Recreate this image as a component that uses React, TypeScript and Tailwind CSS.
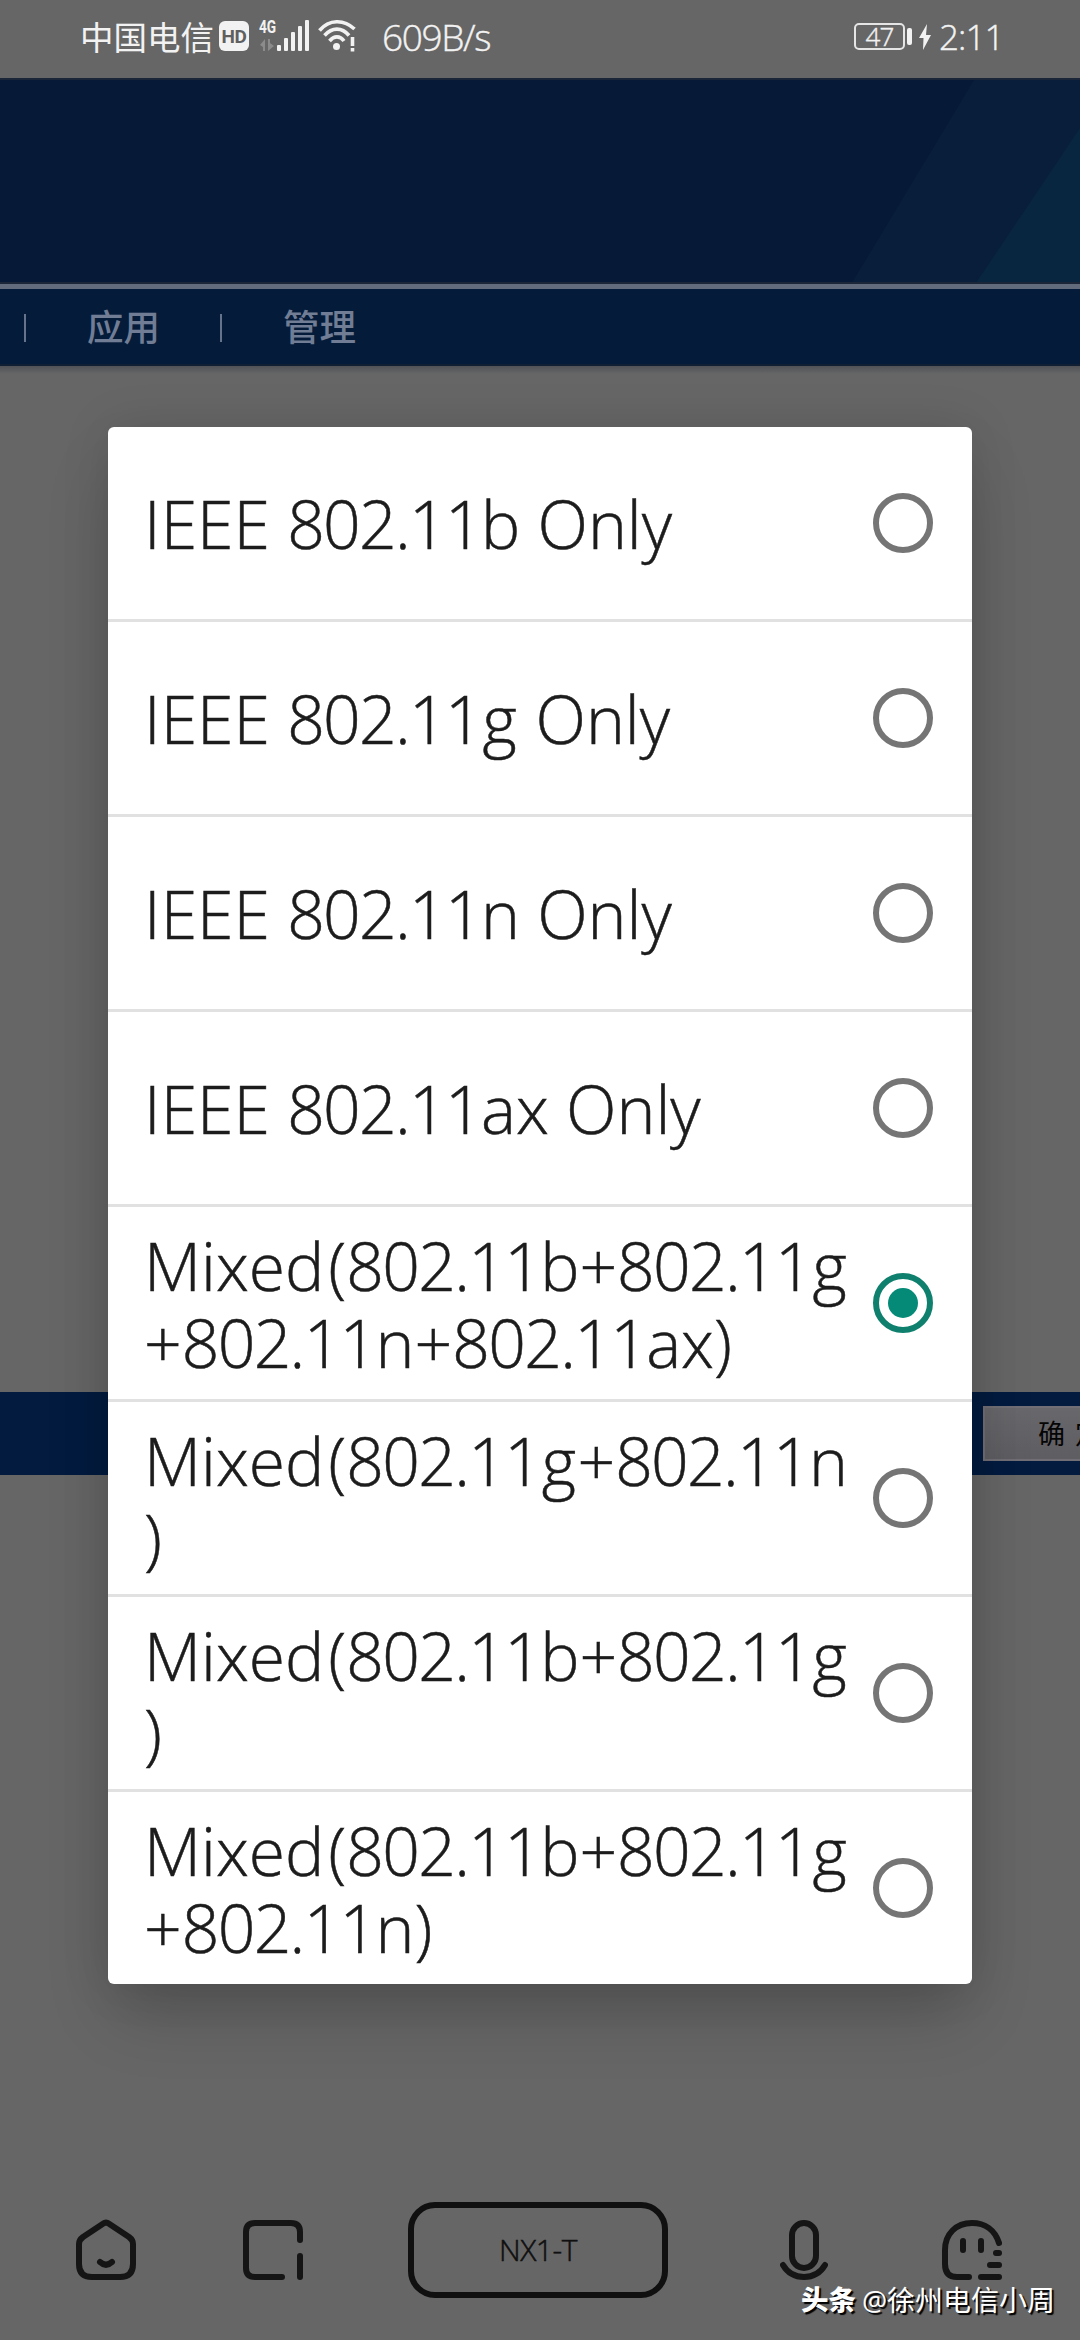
const options: { lines: string[]; selected?: boolean }[] = [
  { lines: ["IEEE 802.11b Only"] },
  { lines: ["IEEE 802.11g Only"] },
  { lines: ["IEEE 802.11n Only"] },
  { lines: ["IEEE 802.11ax Only"] },
  { lines: ["Mixed(802.11b+802.11g", "+802.11n+802.11ax)"], selected: true },
  { lines: ["Mixed(802.11g+802.11n", ")"] },
  { lines: ["Mixed(802.11b+802.11g", ")"] },
  { lines: ["Mixed(802.11b+802.11g", "+802.11n)"] },
];

function StatusBar() {
  return (
    <div className="flex h-[78px] shrink-0 items-start bg-[#666666] pl-20 pr-[79px] pt-[17px] text-[#f2f2f2]">
      <span className="h-10 w-[134px] whitespace-nowrap text-[33.5px] leading-10">中国电信</span>
      <span className="ml-[5px] mt-1 flex h-[30px] w-[30px] items-center justify-center rounded-[6px] bg-[#f2f2f2] font-['Roboto',sans-serif] text-[19px] font-bold leading-none tracking-tight text-[#5f5f5f]">
        HD
      </span>
      <div className="ml-[10px] mt-px flex w-[18px] flex-col font-['Roboto',sans-serif] text-[19px] font-bold leading-[17px]">
        <span className="origin-left scale-x-[0.72]">4G</span>
        <svg width="18" height="14" viewBox="0 0 18 14" className="mt-[3px]" fill="#8b8b8b">
          <path d="M6 1v12H4V9L1 7zM9 13V1h2v4l4 3z" />
        </svg>
      </div>
      <svg width="34" height="34" viewBox="0 0 34 34" className="mt-px" fill="#f2f2f2">
        <rect x="0" y="27" width="4" height="6" rx="1" />
        <rect x="7" y="20" width="4" height="13" rx="1" />
        <rect x="14" y="14" width="4" height="19" rx="1" />
        <rect x="21" y="8" width="4" height="25" rx="1" />
        <rect x="28" y="2" width="4" height="31" rx="1" />
      </svg>
      <svg width="40" height="36" viewBox="0 0 40 36" className="ml-[7px]" fill="none" stroke="#f2f2f2" strokeWidth="3.6">
        <path d="M1.5 13.5C11 2 26 2 36.5 12" />
        <path d="M6.5 18.5C14 10 24 10 31 18.5" />
        <path d="M11.5 24C16 18.5 22 18.5 26 24" />
        <circle cx="18.5" cy="29.5" r="3.5" fill="#f2f2f2" stroke="none" />
        <path d="M34.5 20v9M34.5 31v3.5" />
      </svg>
      <span className="ml-[24px] h-10 w-[110px] whitespace-nowrap text-[37px] font-light leading-[39px] tracking-[-1.4px] [-webkit-text-stroke:0.4px_#f2f2f2]">609B/s</span>
      <div className="ml-auto mt-[6px] flex h-[27px] w-[51px] items-center justify-center rounded-[5px] border-2 border-[#e5e5e5] pb-[2px] text-[26px] font-light leading-none tracking-[-0.8px] [-webkit-text-stroke:0.4px_#f2f2f2]">
        47
      </div>
      <span className="ml-[2px] mt-[11px] h-[17px] w-[5px] rounded-[2px] bg-[#f2f2f2]" />
      <svg width="12" height="26" viewBox="0 0 12 26" className="ml-[7px] mt-[7px]" fill="#f2f2f2">
        <path d="M8 0 0 14h4.500L4 26l8-15H7z" />
      </svg>
      <span className="ml-[8px] h-10 w-[62px] whitespace-nowrap text-[35px] font-light leading-10 tracking-[-0.9px] [-webkit-text-stroke:0.4px_#f2f2f2]">2:11</span>
    </div>
  );
}

function NavBar() {
  return (
    <div className="flex h-[77px] shrink-0 items-center border-b-2 border-[#101f33] bg-[#051b3a] pl-6 pt-[2px] text-[36.5px] font-medium leading-none text-[#707d94]">
      <span className="h-7 w-[2px] bg-[#66738c]" />
      <span className="ml-[61px] w-[73px]">应用</span>
      <span className="ml-[60px] h-7 w-[2px] bg-[#66738c]" />
      <span className="ml-[61px] w-[73px]">管理</span>
    </div>
  );
}

function Radio({ selected }: { selected?: boolean }) {
  return (
    <span
      className={
        selected
          ? "flex h-[60px] w-[60px] shrink-0 items-center justify-center rounded-full border-[6px] border-[#0f806d]"
          : "h-[60px] w-[60px] shrink-0 rounded-full border-[6px] border-[#757575]"
      }
    >
      {selected && <span className="h-[30px] w-[30px] rounded-full bg-[#048a76]" />}
    </span>
  );
}

/* Digits are set tighter than letters; "g" and the word "Mixed" get a little extra room. */
function OptionLine({ text }: { text: string }) {
  return (
    <div className="h-[77px] w-[712px]">
      {text.split(/(802\.11|g|Mixed)/).map((part, i) => {
        if (part === "802.11") {
          return (
            <span key={i} className="tracking-[-1.7px]">
              {part}
            </span>
          );
        }
        if (part === "g") {
          return (
            <span key={i} className="px-[1.5px]">
              g
            </span>
          );
        }
        if (part === "Mixed") {
          return (
            <span key={i} className="pr-1">
              Mixed
            </span>
          );
        }
        return part;
      })}
    </div>
  );
}

function Dialog() {
  return (
    <div className="absolute left-[108px] top-[427px] w-[864px] divide-y-[3px] divide-[#e1e1e1] overflow-hidden rounded-[6px] bg-white">
      {options.map((option, i) => (
        <div key={i} className="box-content flex h-[192px] items-center">
          <div className="w-[712px] shrink-0 whitespace-nowrap pl-9 pt-px text-[66px] font-light leading-[77px] text-[#1c1c1c] [-webkit-text-stroke:0.5px_#1c1c1c]">
            {option.lines.map((line, n) => (
              <OptionLine key={n} text={line} />
            ))}
          </div>
          <div className="ml-[53px] flex">
            <Radio selected={option.selected} />
          </div>
        </div>
      ))}
    </div>
  );
}

function BottomBar() {
  return (
    <div className="flex h-[138px] shrink-0 items-start pl-[76px]">
      <svg width="60" height="64" viewBox="0 0 60 64" className="mt-4" fill="none" stroke="#151515" strokeWidth="6" strokeLinecap="round" strokeLinejoin="round">
        <path d="M27 5.7Q30 3.500 33 5.700L53 19Q57 22 57 26V46Q57 59 44 59H16Q3 59 3 46V26Q3 22 7 19Z" />
        <path d="M24 44Q30 49.5 36 44" />
      </svg>
      <svg width="60" height="60" viewBox="0 0 60 60" className="ml-[107px] mt-[18px]" fill="none" stroke="#151515" strokeWidth="6" strokeLinecap="round">
        <path d="M57 20V12Q57 3 48 3H12Q3 3 3 12V48Q3 57 12 57H39M57 36V57" />
      </svg>
      <div className="ml-[105px] flex h-24 w-[260px] items-center justify-center rounded-[27px] border-[6px] border-[#101010] text-[30px] font-light leading-none tracking-[-0.5px] text-[#101010] [-webkit-text-stroke:0.5px_#101010]">
        NX1-T
      </div>
      <svg width="48" height="60" viewBox="0 0 48 60" className="ml-[112px] mt-[18px]" fill="none" stroke="#151515" strokeWidth="6" strokeLinecap="round">
        <rect x="12" y="3" width="24" height="45" rx="12" />
        <path d="M3 45Q10 57 24 57T45 45" />
      </svg>
      <svg width="60" height="60" viewBox="0 0 60 60" className="ml-[114px] mt-[18px]" fill="none" stroke="#151515" strokeWidth="6" strokeLinecap="round">
        <path d="M57 23C53 10 43 3 30 3 14 3 3 14 3 30V44Q3 57 15 57H27M39 57H57M48 45H57M54 33H57M21 21V30M39 21V30" />
      </svg>
    </div>
  );
}

export default function App() {
  return (
    <div className="relative flex h-[2340px] w-[1080px] flex-col overflow-hidden bg-[#666666] font-['Open_Sans','Noto_Sans_CJK_SC',sans-serif]">
      <StatusBar />
      <div className="relative h-[206px] shrink-0 overflow-hidden border-b-2 border-t-2 border-[#1b2739] bg-[#061a37]">
        <svg width="240" height="206" viewBox="0 0 240 206" className="absolute right-0 top-0">
          <path d="M134 0H240V206H10Z" fill="#091e3b" />
          <path d="M240 48V206H134Z" fill="#08263f" />
        </svg>
      </div>
      <div className="h-[5px] shrink-0 bg-[#626b7b]" />
      <NavBar />
      <div className="h-2 shrink-0 bg-linear-to-b from-[#505257] to-[#666666]" />
      <div className="h-[1018px] shrink-0" />
      <div className="flex h-[83px] shrink-0 items-center bg-[#031b3f] pl-[983px]">
        <div className="flex h-[55px] w-[180px] shrink-0 items-center whitespace-nowrap border-2 border-[#716f75] bg-linear-to-b from-[#68676b] to-[#5e5d61] pl-[53px] text-[27px] leading-none text-[#050505]">
          确<span className="ml-[10px]">定</span>
        </div>
      </div>
      <div className="h-[727px] shrink-0" />
      <BottomBar />
      <div className="absolute left-[108px] top-[427px] h-[1557px] w-[864px] rounded-[6px] shadow-[0_36px_64px_-8px_rgba(0,0,0,0.2),0_0_50px_rgba(0,0,0,0.1)]" />
      <Dialog />
      <div className="absolute left-[801px] top-[2280px] flex h-10 items-center whitespace-nowrap text-[28px] leading-10 text-white [text-shadow:2px_2px_1px_#000]">
        <span className="w-[61px] text-[27.5px] font-black">头条</span>
        <span>@徐州电信小周</span>
      </div>
    </div>
  );
}
